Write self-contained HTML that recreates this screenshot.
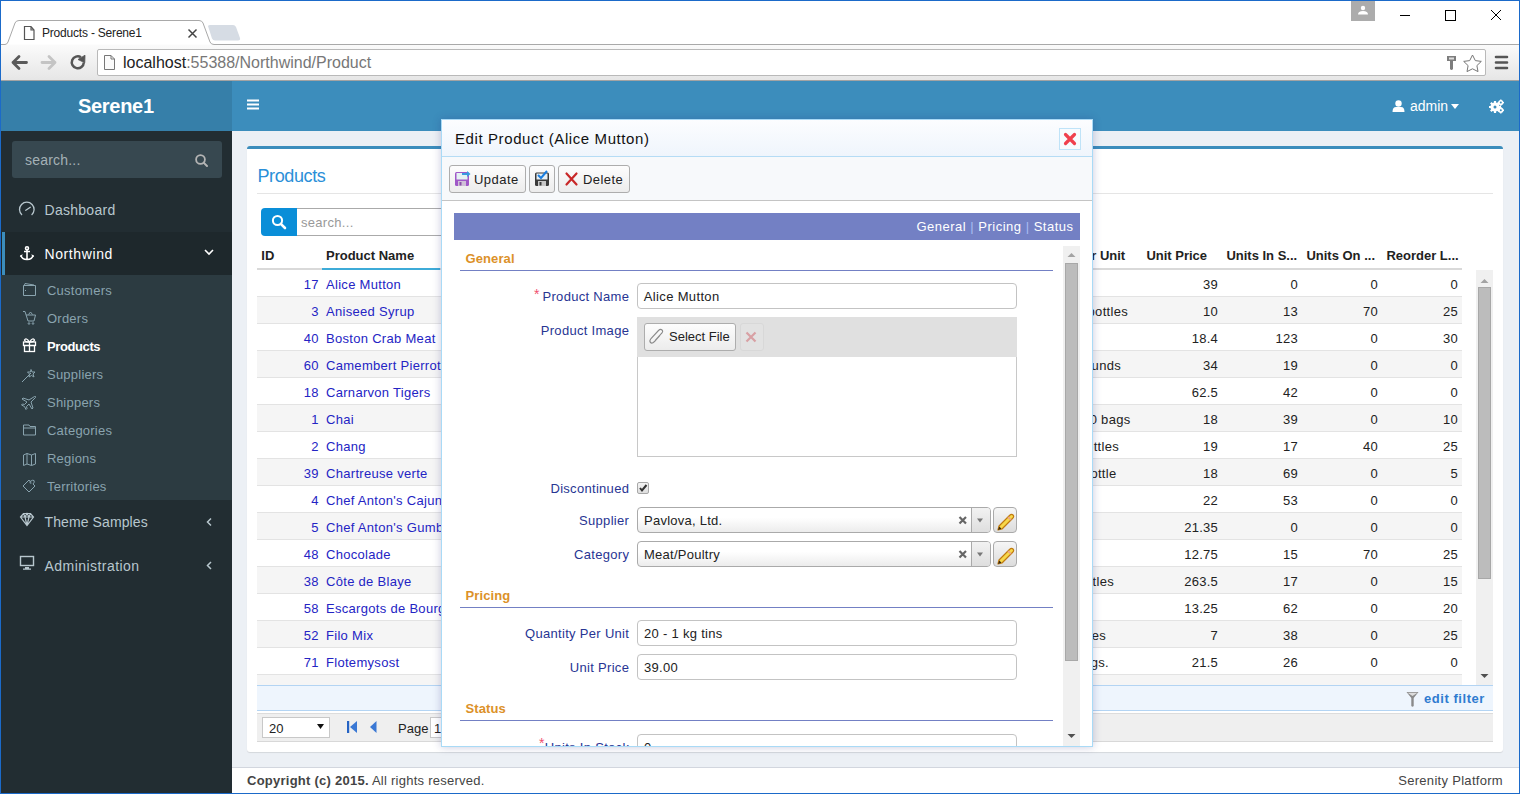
<!DOCTYPE html>
<html><head><meta charset="utf-8">
<style>
*{box-sizing:border-box}
html,body{margin:0;padding:0}
body{width:1520px;height:794px;overflow:hidden;position:relative;background:#fff;font-family:"Liberation Sans",sans-serif;color:#333}
.a{position:absolute}
.t{position:absolute;white-space:nowrap;line-height:1}
/* chrome */
#titlebar{left:0;top:0;width:1520px;height:44px;background:#fff}
#toolbar{left:0;top:44px;width:1520px;height:37px;background:linear-gradient(#fbfbfb,#e6e6e6);border-bottom:1px solid #a3a3a3}
#url{left:97px;top:49px;width:1389px;height:27px;background:#fff;border:1px solid #b9b9b9;border-radius:2px}
/* header */
#hdrL{left:0;top:81px;width:232px;height:50px;background:#367fa9}
#hdrR{left:232px;top:81px;width:1288px;height:50px;background:#3c8dbc}
#side{left:0;top:131px;width:232px;height:663px;background:#222d32}
#content{left:232px;top:131px;width:1288px;height:636px;background:#ecf0f5}
#footer{left:232px;top:767px;width:1288px;height:27px;background:#fff;border-top:1px solid #d2d6de}
#winborder{left:0;top:0;width:1520px;height:794px;border:1px solid #1b6ac9;z-index:100;pointer-events:none}
</style></head>
<body>
<div id="titlebar" class="a"></div>
<div id="toolbar" class="a"></div>
<div id="url" class="a"></div>
<svg class="a" style="left:0;top:0" width="1520" height="81">
  <path d="M0.5 44.5 H5 Q7 44.5 8 42 L15 23 Q16 20.5 19 20.5 H199 Q202 20.5 203 23 L210 42 Q211 44.5 214 44.5 H1520" fill="#fff" stroke="#a9a9a9" stroke-width="1"/>
  <path d="M208 26 Q208.5 25 210 25 H233 Q235 25 236 27 L240 38 Q240.5 40.5 238 40.5 H215 Q213 40.5 212 38.5 Z" fill="#d6dce4"/>
  <path d="M24.5 26.5 H31 L34 30 V39.5 H24.5 Z M31 26.5 V30 H34" fill="#fff" stroke="#555" stroke-width="1.2"/>
  <path d="M188.5 29.5 L196.5 37.5 M196.5 29.5 L188.5 37.5" stroke="#444" stroke-width="1.5"/>
  <rect x="1351" y="1" width="24" height="20" fill="#acacac"/>
  <circle cx="1363" cy="8" r="2.2" fill="#fff"/>
  <path d="M1358 14.5 Q1358 11 1363 11 Q1368 11 1368 14.5 Z" fill="#fff"/>
  <path d="M1400 15.5 H1410" stroke="#000" stroke-width="1"/>
  <rect x="1445.5" y="10.5" width="10" height="10" fill="none" stroke="#000" stroke-width="1"/>
  <path d="M1491 10 L1501 20 M1501 10 L1491 20" stroke="#000" stroke-width="1"/>
  <!-- toolbar -->
  <path d="M13 62.5 H26.5 M19 56.5 L13 62.5 L19 68.5" fill="none" stroke="#5a5a5a" stroke-width="2.8" stroke-linecap="round" stroke-linejoin="round"/>
  <path d="M42 62.5 H55 M49 56.5 L55 62.5 L49 68.5" fill="none" stroke="#c4c4c4" stroke-width="2.8" stroke-linecap="round" stroke-linejoin="round"/>
  <path d="M81 57.2 A6 6 0 1 0 83.8 62.5" fill="none" stroke="#555" stroke-width="2.5"/>
  <path d="M78 59.5 L85 55.2 L84.8 62.8 Z" fill="#555" stroke="#555" stroke-width="0.8" stroke-linejoin="round"/>
  <path d="M104.5 55.5 H111 L114.5 59 V69.5 H104.5 Z M111 55.5 V59 H114.5" fill="#fbfbfb" stroke="#777" stroke-width="1"/>
  <path d="M1447 56 H1456 V61 H1453 V69 Q1451.5 71 1450 69 V61 H1447 Z" fill="#7d7d7d"/>
  <rect x="1449" y="57.5" width="5" height="2" fill="#ddd"/>
  <path d="M1472.5 55 L1475.3 60.6 L1481.3 61.4 L1476.9 65.6 L1478 71.6 L1472.5 68.8 L1467 71.6 L1468.1 65.6 L1463.7 61.4 L1469.7 60.6 Z" fill="#fff" stroke="#777" stroke-width="1"/>
  <path d="M1496 57 H1507 M1496 62.5 H1507 M1496 68 H1507" stroke="#555" stroke-width="2.6" stroke-linecap="round"/>
</svg>
<div class="t" style="left:42px;top:27px;font-size:12px;color:#222;letter-spacing:-0.2px">Products - Serene1</div>
<div class="t" style="left:123px;top:55px;font-size:16px;color:#222">localhost<span style="color:#777">:55388/Northwind/Product</span></div>

<div id="hdrL" class="a"></div>
<div id="hdrR" class="a"></div>
<div id="side" class="a"></div>
<div id="content" class="a"></div>
<div class="t" style="left:78px;top:96.1px;font-size:20px;font-weight:bold;color:#fff;letter-spacing:-0.3px">Serene1</div>
<svg class="a" style="left:232px;top:81px" width="1288" height="50">
  <path d="M15 19.5 H27 M15 23.5 H27 M15 27.5 H27" stroke="#fff" stroke-width="2"/>
  <circle cx="1166.5" cy="22.5" r="3.2" fill="#fff"/>
  <path d="M1160.5 31 Q1160.5 26 1164 26 H1169 Q1172.5 26 1172.5 31 Z" fill="#fff"/>
  <path d="M1219 23 H1227 L1223 28 Z" fill="#fff"/>
  <g fill="#fff">
   <circle cx="1263" cy="26" r="4.6"/>
   <circle cx="1268.8" cy="21.6" r="2.6"/>
   <circle cx="1268.8" cy="29.2" r="2.6"/>
  </g>
  <g stroke="#fff" stroke-width="2.2">
   <path d="M1257 26 H1269 M1263 20 V32 M1258.8 21.8 L1267.2 30.2 M1267.2 21.8 L1258.8 30.2"/>
  </g>
  <g stroke="#fff" stroke-width="1.4">
   <path d="M1265.6 21.6 H1272 M1268.8 18.4 V24.8 M1265.6 29.2 H1272 M1268.8 26 V32.4"/>
  </g>
  <circle cx="1263" cy="26" r="1.5" fill="#3c8dbc"/>
  <circle cx="1268.8" cy="21.6" r="1" fill="#3c8dbc"/>
  <circle cx="1268.8" cy="29.2" r="1" fill="#3c8dbc"/>
</svg>
<div class="t" style="left:1410px;top:98.7px;font-size:14px;color:#fff">admin</div>

<div class="a" style="left:12px;top:141px;width:210px;height:37px;background:#374850;border-radius:3px"></div>
<div class="t" style="left:25px;top:153.1px;font-size:14px;color:#a4b1b6;letter-spacing:0.2px">search...</div>
<div class="a" style="left:0;top:232px;width:232px;height:43px;background:#1e282c"></div>
<div class="a" style="left:2px;top:232px;width:3px;height:43px;background:#3c8dbc"></div>
<div class="a" style="left:0;top:275px;width:232px;height:225px;background:#2c3b41"></div>
<div class="t" style="left:44.5px;top:203.1px;font-size:14px;color:#b8c7ce;letter-spacing:0.28px">Dashboard</div>
<div class="t" style="left:44.5px;top:247.1px;font-size:14px;color:#fff;letter-spacing:0.6px">Northwind</div>
<div class="t" style="left:47px;top:284.0px;font-size:13px;color:#8aa4af;letter-spacing:0.23px">Customers</div>
<div class="t" style="left:47px;top:312.0px;font-size:13px;color:#8aa4af;letter-spacing:0.23px">Orders</div>
<div class="t" style="left:47px;top:340.0px;font-size:13px;color:#fff;font-weight:bold;letter-spacing:-0.4px">Products</div>
<div class="t" style="left:47px;top:368.0px;font-size:13px;color:#8aa4af;letter-spacing:0.23px">Suppliers</div>
<div class="t" style="left:47px;top:396.0px;font-size:13px;color:#8aa4af;letter-spacing:0.23px">Shippers</div>
<div class="t" style="left:47px;top:424.0px;font-size:13px;color:#8aa4af;letter-spacing:0.23px">Categories</div>
<div class="t" style="left:47px;top:452.0px;font-size:13px;color:#8aa4af;letter-spacing:0.23px">Regions</div>
<div class="t" style="left:47px;top:480.0px;font-size:13px;color:#8aa4af;letter-spacing:0.23px">Territories</div>
<div class="t" style="left:44.5px;top:515.1px;font-size:14px;color:#b8c7ce;letter-spacing:0.1px">Theme Samples</div>
<div class="t" style="left:44.5px;top:558.6px;font-size:14px;color:#b8c7ce;letter-spacing:0.45px">Administration</div>
<svg class="a" style="left:0;top:131px" width="232" height="663">
  <!-- search icon -->
  <circle cx="200.5" cy="28.5" r="4.4" fill="none" stroke="#b4b4b4" stroke-width="1.8"/>
  <path d="M203.6 31.6 L207 35" stroke="#b4b4b4" stroke-width="2" stroke-linecap="round"/>
  <!-- dashboard gauge -->
  <path d="M22 84 A7.3 7.3 0 1 1 31.6 84" fill="none" stroke="#b8c7ce" stroke-width="1.3"/>
  <path d="M25.8 79.3 L30.3 76.3" stroke="#b8c7ce" stroke-width="1.3" stroke-linecap="round"/>
  <!-- anchor -->
  <g fill="none" stroke="#fff" stroke-width="1.6">
   <circle cx="27" cy="117.3" r="1.5"/>
   <path d="M27 119 V128.5 M24 120.5 H30 M21 124 Q21.5 128.5 27 128.5 Q32.5 128.5 33 124"/>
  </g>
  <path d="M19.8 125.3 L22.5 123 L21.8 126.8 Z M34.2 125.3 L31.5 123 L32.2 126.8 Z" fill="#fff"/>
  <path d="M205 119 L209 123 L213 119" fill="none" stroke="#fff" stroke-width="1.6"/>
  <!-- customers wallet -->
  <g fill="none" stroke="#8aa4af" stroke-width="1">
   <path d="M23.5 154.5 H35.5 V164.5 H23.5 Z M24.5 154 L25 152.5 L34 154"/>
   <path d="M25 159.5 H26"/>
   <!-- orders cart -->
   <path d="M23 180.5 L25 180.5 L28 190 H34 L35.5 184 H26"/>
   <circle cx="29" cy="192.5" r="0.8"/><circle cx="33" cy="192.5" r="0.8"/>
   <path d="M28.5 183.5 L30.5 181 L32.5 183.5"/>
  </g>
  <!-- products gift -->
  <g fill="none" stroke="#fff" stroke-width="1.3">
   <rect x="23.5" y="211" width="12" height="3.5"/>
   <rect x="24.5" y="214.5" width="10" height="6"/>
   <path d="M29.5 211 V220.5 M29.5 211 Q26 206 24.5 209 Q25 211 29.5 211 M29.5 211 Q33 206 34.5 209 Q34 211 29.5 211"/>
  </g>
  <g fill="none" stroke="#8aa4af" stroke-width="1">
   <!-- suppliers wand -->
   <path d="M22 251 L31 242 M31 238.5 L32 241 L35 241 L33 243 L34 246 L31.5 244.5 L29 246 L29.5 243 L27.5 241 L30.5 241 Z"/>
   <!-- shippers plane -->
   <path d="M34.5 265.5 Q36 265 35.5 266.5 L31 271 L33 277 L32 278 L29 273 L26.5 275.5 L27 277.5 L26 278.5 L24.5 275.5 L21.5 274 L22.5 273 L24.5 273.5 L27 271 L22 268 L23 267 L29 269 Z"/>
   <!-- categories folder -->
   <path d="M23.5 294 H29 L30 295.5 H35.5 V304 H23.5 Z M23.5 297 H35.5"/>
   <!-- regions map -->
   <path d="M23.5 324 L27 322.5 L31.5 324 L35.5 322.5 V333 L31.5 334.5 L27 333 L23.5 334.5 Z M27 322.5 V333 M31.5 324 V334.5"/>
   <!-- territories tag -->
   <path d="M23 355 L29 349 L30 350.5 Q33 348.5 34 349.5 Q35 351 33 353 L35 355 L29 361 Z M30 350.5 Q29.5 353 31.5 352"/>
  </g>
  <!-- diamond -->
  <g fill="none" stroke="#b8c7ce" stroke-width="1.2">
   <path d="M20.5 386 L23.5 382.5 H30.5 L33.5 386 L27 394.5 Z M20.5 386 H33.5 M25 386 L27 394.5 L29 386 M23.5 382.5 L25 386 L27 382.5 L29 386 L30.5 382.5"/>
  </g>
  <!-- monitor -->
  <g fill="none" stroke="#b8c7ce" stroke-width="1.4">
   <rect x="20.5" y="425.5" width="13" height="9"/>
  </g>
  <path d="M25 436 H29 V437.5 H31 V438.8 H23 V437.5 H25 Z" fill="#b8c7ce"/>
  <path d="M211 387.5 L207.5 391 L211 394.5 M211 431 L207.5 434.5 L211 438" fill="none" stroke="#b8c7ce" stroke-width="1.5"/>
</svg>

<div id="footer" class="a"></div>
<div class="a" style="left:247px;top:146px;width:1256px;height:606px;background:#fff;border-top:3px solid #3c8dbc;border-radius:3px;box-shadow:0 1px 1px rgba(0,0,0,0.1)"></div>
<div class="t" style="left:257.5px;top:166.5px;font-size:18px;color:#2a8fd8;letter-spacing:-0.4px">Products</div>
<div class="a" style="left:257px;top:193px;width:1236px;height:1px;background:#e5e5e5"></div>
<div class="a" style="left:261px;top:208px;width:36px;height:28px;background:#0a8ed8;border-radius:4px 0 0 4px"></div>
<div class="a" style="left:297px;top:208px;width:300px;height:28px;background:#fff;border:1px solid #aaa;border-left:none"></div>
<svg class="a" style="left:261px;top:208px" width="36" height="28"><circle cx="16.5" cy="12.5" r="4.6" fill="none" stroke="#fff" stroke-width="2"/><path d="M19.8 15.8 L24 20" stroke="#fff" stroke-width="2.6" stroke-linecap="round"/></svg>
<div class="t" style="left:301px;top:215.5px;font-size:13px;color:#999;letter-spacing:0.3px">search...</div>
<div class="t" style="left:261.3px;top:249.2px;font-size:13px;font-weight:bold;color:#222">ID</div>
<div class="t" style="left:326px;top:249.2px;font-size:13px;font-weight:bold;color:#222">Product Name</div>
<div class="t" style="left:1146.4px;top:249.2px;font-size:13px;font-weight:bold;color:#222">Unit Price</div>
<div class="t" style="left:1226.4px;top:249.2px;font-size:13px;font-weight:bold;color:#222">Units In S...</div>
<div class="t" style="left:1306.4px;top:249.2px;font-size:13px;font-weight:bold;color:#222">Units On ...</div>
<div class="t" style="left:1386.4px;top:249.2px;font-size:13px;font-weight:bold;color:#222">Reorder L...</div>
<div class="t" style="right:394.79999999999995px;top:249.2px;font-size:13px;font-weight:bold;color:#222">Quantity Per Unit</div>
<div class="a" style="left:257px;top:268px;width:65px;height:2px;background:#d9d9d9"></div>
<div class="a" style="left:322px;top:268px;width:118px;height:2px;background:#3dabd8"></div>
<div class="a" style="left:440px;top:268px;width:1022px;height:2px;background:#d9d9d9"></div>
<div class="a" style="left:257px;top:270px;width:1205px;height:27px;background:#fff;border-bottom:1px solid #e3e3e3"></div>
<div class="t" style="right:1201.4px;top:278.0px;font-size:13px;color:#2424c4;letter-spacing:0.2px">17</div>
<div class="t" style="left:326px;top:278.0px;font-size:13px;color:#2424c4;letter-spacing:0.3px">Alice Mutton</div>
<div class="t" style="right:302.1px;top:278.0px;font-size:13px;color:#222;letter-spacing:0.2px">39</div>
<div class="t" style="right:222.1px;top:278.0px;font-size:13px;color:#222;letter-spacing:0.2px">0</div>
<div class="t" style="right:142.1px;top:278.0px;font-size:13px;color:#222;letter-spacing:0.2px">0</div>
<div class="t" style="right:62.1px;top:278.0px;font-size:13px;color:#222;letter-spacing:0.2px">0</div>
<div class="a" style="left:257px;top:297px;width:1205px;height:27px;background:#f5f5f5;border-bottom:1px solid #e3e3e3"></div>
<div class="t" style="right:1201.4px;top:305.0px;font-size:13px;color:#2424c4;letter-spacing:0.2px">3</div>
<div class="t" style="left:326px;top:305.0px;font-size:13px;color:#2424c4;letter-spacing:0.3px">Aniseed Syrup</div>
<div class="t" style="right:392px;top:305.0px;font-size:13px;color:#222;letter-spacing:0.3px">bottles</div>
<div class="t" style="right:302.1px;top:305.0px;font-size:13px;color:#222;letter-spacing:0.2px">10</div>
<div class="t" style="right:222.1px;top:305.0px;font-size:13px;color:#222;letter-spacing:0.2px">13</div>
<div class="t" style="right:142.1px;top:305.0px;font-size:13px;color:#222;letter-spacing:0.2px">70</div>
<div class="t" style="right:62.1px;top:305.0px;font-size:13px;color:#222;letter-spacing:0.2px">25</div>
<div class="a" style="left:257px;top:324px;width:1205px;height:27px;background:#fff;border-bottom:1px solid #e3e3e3"></div>
<div class="t" style="right:1201.4px;top:332.0px;font-size:13px;color:#2424c4;letter-spacing:0.2px">40</div>
<div class="t" style="left:326px;top:332.0px;font-size:13px;color:#2424c4;letter-spacing:0.3px">Boston Crab Meat</div>
<div class="t" style="right:302.1px;top:332.0px;font-size:13px;color:#222;letter-spacing:0.2px">18.4</div>
<div class="t" style="right:222.1px;top:332.0px;font-size:13px;color:#222;letter-spacing:0.2px">123</div>
<div class="t" style="right:142.1px;top:332.0px;font-size:13px;color:#222;letter-spacing:0.2px">0</div>
<div class="t" style="right:62.1px;top:332.0px;font-size:13px;color:#222;letter-spacing:0.2px">30</div>
<div class="a" style="left:257px;top:351px;width:1205px;height:27px;background:#f5f5f5;border-bottom:1px solid #e3e3e3"></div>
<div class="t" style="right:1201.4px;top:359.0px;font-size:13px;color:#2424c4;letter-spacing:0.2px">60</div>
<div class="t" style="left:326px;top:359.0px;font-size:13px;color:#2424c4;letter-spacing:0.3px">Camembert Pierrot</div>
<div class="t" style="right:399px;top:359.0px;font-size:13px;color:#222;letter-spacing:0.3px">rounds</div>
<div class="t" style="right:302.1px;top:359.0px;font-size:13px;color:#222;letter-spacing:0.2px">34</div>
<div class="t" style="right:222.1px;top:359.0px;font-size:13px;color:#222;letter-spacing:0.2px">19</div>
<div class="t" style="right:142.1px;top:359.0px;font-size:13px;color:#222;letter-spacing:0.2px">0</div>
<div class="t" style="right:62.1px;top:359.0px;font-size:13px;color:#222;letter-spacing:0.2px">0</div>
<div class="a" style="left:257px;top:378px;width:1205px;height:27px;background:#fff;border-bottom:1px solid #e3e3e3"></div>
<div class="t" style="right:1201.4px;top:386.0px;font-size:13px;color:#2424c4;letter-spacing:0.2px">18</div>
<div class="t" style="left:326px;top:386.0px;font-size:13px;color:#2424c4;letter-spacing:0.3px">Carnarvon Tigers</div>
<div class="t" style="right:302.1px;top:386.0px;font-size:13px;color:#222;letter-spacing:0.2px">62.5</div>
<div class="t" style="right:222.1px;top:386.0px;font-size:13px;color:#222;letter-spacing:0.2px">42</div>
<div class="t" style="right:142.1px;top:386.0px;font-size:13px;color:#222;letter-spacing:0.2px">0</div>
<div class="t" style="right:62.1px;top:386.0px;font-size:13px;color:#222;letter-spacing:0.2px">0</div>
<div class="a" style="left:257px;top:405px;width:1205px;height:27px;background:#f5f5f5;border-bottom:1px solid #e3e3e3"></div>
<div class="t" style="right:1201.4px;top:413.0px;font-size:13px;color:#2424c4;letter-spacing:0.2px">1</div>
<div class="t" style="left:326px;top:413.0px;font-size:13px;color:#2424c4;letter-spacing:0.3px">Chai</div>
<div class="t" style="right:389.5px;top:413.0px;font-size:13px;color:#222;letter-spacing:0.3px">20 bags</div>
<div class="t" style="right:302.1px;top:413.0px;font-size:13px;color:#222;letter-spacing:0.2px">18</div>
<div class="t" style="right:222.1px;top:413.0px;font-size:13px;color:#222;letter-spacing:0.2px">39</div>
<div class="t" style="right:142.1px;top:413.0px;font-size:13px;color:#222;letter-spacing:0.2px">0</div>
<div class="t" style="right:62.1px;top:413.0px;font-size:13px;color:#222;letter-spacing:0.2px">10</div>
<div class="a" style="left:257px;top:432px;width:1205px;height:27px;background:#fff;border-bottom:1px solid #e3e3e3"></div>
<div class="t" style="right:1201.4px;top:440.0px;font-size:13px;color:#2424c4;letter-spacing:0.2px">2</div>
<div class="t" style="left:326px;top:440.0px;font-size:13px;color:#2424c4;letter-spacing:0.3px">Chang</div>
<div class="t" style="right:401px;top:440.0px;font-size:13px;color:#222;letter-spacing:0.3px">bottles</div>
<div class="t" style="right:302.1px;top:440.0px;font-size:13px;color:#222;letter-spacing:0.2px">19</div>
<div class="t" style="right:222.1px;top:440.0px;font-size:13px;color:#222;letter-spacing:0.2px">17</div>
<div class="t" style="right:142.1px;top:440.0px;font-size:13px;color:#222;letter-spacing:0.2px">40</div>
<div class="t" style="right:62.1px;top:440.0px;font-size:13px;color:#222;letter-spacing:0.2px">25</div>
<div class="a" style="left:257px;top:459px;width:1205px;height:27px;background:#f5f5f5;border-bottom:1px solid #e3e3e3"></div>
<div class="t" style="right:1201.4px;top:467.0px;font-size:13px;color:#2424c4;letter-spacing:0.2px">39</div>
<div class="t" style="left:326px;top:467.0px;font-size:13px;color:#2424c4;letter-spacing:0.3px">Chartreuse verte</div>
<div class="t" style="right:403.5px;top:467.0px;font-size:13px;color:#222;letter-spacing:0.3px">bottle</div>
<div class="t" style="right:302.1px;top:467.0px;font-size:13px;color:#222;letter-spacing:0.2px">18</div>
<div class="t" style="right:222.1px;top:467.0px;font-size:13px;color:#222;letter-spacing:0.2px">69</div>
<div class="t" style="right:142.1px;top:467.0px;font-size:13px;color:#222;letter-spacing:0.2px">0</div>
<div class="t" style="right:62.1px;top:467.0px;font-size:13px;color:#222;letter-spacing:0.2px">5</div>
<div class="a" style="left:257px;top:486px;width:1205px;height:27px;background:#fff;border-bottom:1px solid #e3e3e3"></div>
<div class="t" style="right:1201.4px;top:494.0px;font-size:13px;color:#2424c4;letter-spacing:0.2px">4</div>
<div class="t" style="left:326px;top:494.0px;font-size:13px;color:#2424c4;letter-spacing:0.3px">Chef Anton's Cajun Seasoning</div>
<div class="t" style="right:302.1px;top:494.0px;font-size:13px;color:#222;letter-spacing:0.2px">22</div>
<div class="t" style="right:222.1px;top:494.0px;font-size:13px;color:#222;letter-spacing:0.2px">53</div>
<div class="t" style="right:142.1px;top:494.0px;font-size:13px;color:#222;letter-spacing:0.2px">0</div>
<div class="t" style="right:62.1px;top:494.0px;font-size:13px;color:#222;letter-spacing:0.2px">0</div>
<div class="a" style="left:257px;top:513px;width:1205px;height:27px;background:#f5f5f5;border-bottom:1px solid #e3e3e3"></div>
<div class="t" style="right:1201.4px;top:521.0px;font-size:13px;color:#2424c4;letter-spacing:0.2px">5</div>
<div class="t" style="left:326px;top:521.0px;font-size:13px;color:#2424c4;letter-spacing:0.3px">Chef Anton's Gumbo Mix</div>
<div class="t" style="right:302.1px;top:521.0px;font-size:13px;color:#222;letter-spacing:0.2px">21.35</div>
<div class="t" style="right:222.1px;top:521.0px;font-size:13px;color:#222;letter-spacing:0.2px">0</div>
<div class="t" style="right:142.1px;top:521.0px;font-size:13px;color:#222;letter-spacing:0.2px">0</div>
<div class="t" style="right:62.1px;top:521.0px;font-size:13px;color:#222;letter-spacing:0.2px">0</div>
<div class="a" style="left:257px;top:540px;width:1205px;height:27px;background:#fff;border-bottom:1px solid #e3e3e3"></div>
<div class="t" style="right:1201.4px;top:548.0px;font-size:13px;color:#2424c4;letter-spacing:0.2px">48</div>
<div class="t" style="left:326px;top:548.0px;font-size:13px;color:#2424c4;letter-spacing:0.3px">Chocolade</div>
<div class="t" style="right:302.1px;top:548.0px;font-size:13px;color:#222;letter-spacing:0.2px">12.75</div>
<div class="t" style="right:222.1px;top:548.0px;font-size:13px;color:#222;letter-spacing:0.2px">15</div>
<div class="t" style="right:142.1px;top:548.0px;font-size:13px;color:#222;letter-spacing:0.2px">70</div>
<div class="t" style="right:62.1px;top:548.0px;font-size:13px;color:#222;letter-spacing:0.2px">25</div>
<div class="a" style="left:257px;top:567px;width:1205px;height:27px;background:#f5f5f5;border-bottom:1px solid #e3e3e3"></div>
<div class="t" style="right:1201.4px;top:575.0px;font-size:13px;color:#2424c4;letter-spacing:0.2px">38</div>
<div class="t" style="left:326px;top:575.0px;font-size:13px;color:#2424c4;letter-spacing:0.3px">Côte de Blaye</div>
<div class="t" style="right:406px;top:575.0px;font-size:13px;color:#222;letter-spacing:0.3px">bottles</div>
<div class="t" style="right:302.1px;top:575.0px;font-size:13px;color:#222;letter-spacing:0.2px">263.5</div>
<div class="t" style="right:222.1px;top:575.0px;font-size:13px;color:#222;letter-spacing:0.2px">17</div>
<div class="t" style="right:142.1px;top:575.0px;font-size:13px;color:#222;letter-spacing:0.2px">0</div>
<div class="t" style="right:62.1px;top:575.0px;font-size:13px;color:#222;letter-spacing:0.2px">15</div>
<div class="a" style="left:257px;top:594px;width:1205px;height:27px;background:#fff;border-bottom:1px solid #e3e3e3"></div>
<div class="t" style="right:1201.4px;top:602.0px;font-size:13px;color:#2424c4;letter-spacing:0.2px">58</div>
<div class="t" style="left:326px;top:602.0px;font-size:13px;color:#2424c4;letter-spacing:0.3px">Escargots de Bourgogne</div>
<div class="t" style="right:302.1px;top:602.0px;font-size:13px;color:#222;letter-spacing:0.2px">13.25</div>
<div class="t" style="right:222.1px;top:602.0px;font-size:13px;color:#222;letter-spacing:0.2px">62</div>
<div class="t" style="right:142.1px;top:602.0px;font-size:13px;color:#222;letter-spacing:0.2px">0</div>
<div class="t" style="right:62.1px;top:602.0px;font-size:13px;color:#222;letter-spacing:0.2px">20</div>
<div class="a" style="left:257px;top:621px;width:1205px;height:27px;background:#f5f5f5;border-bottom:1px solid #e3e3e3"></div>
<div class="t" style="right:1201.4px;top:629.0px;font-size:13px;color:#2424c4;letter-spacing:0.2px">52</div>
<div class="t" style="left:326px;top:629.0px;font-size:13px;color:#2424c4;letter-spacing:0.3px">Filo Mix</div>
<div class="t" style="right:414px;top:629.0px;font-size:13px;color:#222;letter-spacing:0.3px">boxes</div>
<div class="t" style="right:302.1px;top:629.0px;font-size:13px;color:#222;letter-spacing:0.2px">7</div>
<div class="t" style="right:222.1px;top:629.0px;font-size:13px;color:#222;letter-spacing:0.2px">38</div>
<div class="t" style="right:142.1px;top:629.0px;font-size:13px;color:#222;letter-spacing:0.2px">0</div>
<div class="t" style="right:62.1px;top:629.0px;font-size:13px;color:#222;letter-spacing:0.2px">25</div>
<div class="a" style="left:257px;top:648px;width:1205px;height:27px;background:#fff;border-bottom:1px solid #e3e3e3"></div>
<div class="t" style="right:1201.4px;top:656.0px;font-size:13px;color:#2424c4;letter-spacing:0.2px">71</div>
<div class="t" style="left:326px;top:656.0px;font-size:13px;color:#2424c4;letter-spacing:0.3px">Flotemysost</div>
<div class="t" style="right:411px;top:656.0px;font-size:13px;color:#222;letter-spacing:0.3px">pkgs.</div>
<div class="t" style="right:302.1px;top:656.0px;font-size:13px;color:#222;letter-spacing:0.2px">21.5</div>
<div class="t" style="right:222.1px;top:656.0px;font-size:13px;color:#222;letter-spacing:0.2px">26</div>
<div class="t" style="right:142.1px;top:656.0px;font-size:13px;color:#222;letter-spacing:0.2px">0</div>
<div class="t" style="right:62.1px;top:656.0px;font-size:13px;color:#222;letter-spacing:0.2px">0</div>
<div class="a" style="left:257px;top:675px;width:1205px;height:10px;background:#f5f5f5;"></div>
<div class="a" style="left:1476px;top:270px;width:17px;height:415px;background:#f0f0f0"></div>
<div class="a" style="left:1478px;top:287px;width:13px;height:292px;background:#bcbcbc;border:1px solid #a8a8a8"></div>
<svg class="a" style="left:1476px;top:270px" width="17" height="415"><path d="M4.5 13 L8.5 9 L12.5 13 Z" fill="#a3a3a3"/><path d="M4.5 404 L8.5 408 L12.5 404 Z" fill="#505050"/></svg>
<div class="a" style="left:257px;top:685px;width:1236px;height:26px;background:#eef5fd;border-top:1px solid #b3d4f3;border-bottom:1px solid #b3d4f3"></div>
<svg class="a" style="left:1405px;top:690px" width="16" height="18"><path d="M1.5 2 H13.5 L8.7 8 V16 Q7.5 17.5 6.3 16 V8 Z" fill="#8a8a8a"/><path d="M2.5 2.8 H12.5 L7.5 6 Z" fill="#dcdcdc"/></svg>
<div class="t" style="left:1424px;top:692.0px;font-size:13px;font-weight:bold;color:#2f7bd0;letter-spacing:0.55px">edit filter</div>
<div class="a" style="left:257px;top:713px;width:1236px;height:29px;background:#efefef;border-top:1px solid #dcdcdc;border-bottom:1px solid #d8d8d8"></div>
<div class="a" style="left:262px;top:717px;width:68px;height:21px;background:#fff;border:1px solid #c8c8c8"></div>
<div class="t" style="left:269px;top:721.5px;font-size:13px;color:#222">20</div>
<svg class="a" style="left:300px;top:716px" width="140" height="25"><path d="M17 8 H24 L20.5 13 Z" fill="#111"/><rect x="47" y="5" width="2.2" height="12" fill="#2563c4"/><path d="M57 5 V17 L50 11 Z" fill="#3a78d4"/><path d="M76.5 5 V17 L70 11 Z" fill="#3a78d4"/></svg>
<div class="t" style="left:398px;top:721.5px;font-size:13px;color:#222;letter-spacing:0px">Page</div>
<div class="a" style="left:430px;top:717px;width:40px;height:21px;background:#fff;border:1px solid #c8c8c8"></div>
<div class="t" style="left:434px;top:721.5px;font-size:13px;color:#222">1</div>
<div class="t" style="left:247px;top:774.0px;font-size:13px;color:#444;letter-spacing:0.25px"><b>Copyright (c) 2015.</b> All rights reserved.</div>
<div class="t" style="right:17px;top:774.0px;font-size:13px;color:#444;letter-spacing:0.3px">Serenity Platform</div>
<!--DIALOG-->
<div class="a" style="left:441px;top:119px;width:652px;height:628px;background:#fff;border:1px solid #a9daf6;box-shadow:0 0 8px rgba(40,40,120,0.25)"></div>
<div class="a" style="left:442px;top:120px;width:650px;height:37px;background:linear-gradient(#fcfdff,#eff5fc);border-bottom:1px solid #b5dcf5"></div>
<div class="t" style="left:455px;top:131.0px;font-size:15px;color:#111;letter-spacing:0.6px">Edit Product (Alice Mutton)</div>
<div class="a" style="left:1059px;top:128px;width:22px;height:22px;border:1px solid #bfe3f8;background:#f7fbff"></div>
<svg class="a" style="left:1059px;top:128px" width="22" height="22"><path d="M6.5 6.5 L15.5 15.5 M15.5 6.5 L6.5 15.5" stroke="#f0404e" stroke-width="3.2" stroke-linecap="round"/></svg>
<div class="a" style="left:442px;top:157px;width:650px;height:44px;background:#f7f9fb;border-bottom:1px solid #c4c4c4"></div>
<div class="a" style="left:449px;top:165px;width:77px;height:28px;background:linear-gradient(#fdfdfd,#ececec);border:1px solid #adadad;border-radius:3px"></div>
<div class="a" style="left:529px;top:165px;width:26px;height:28px;background:linear-gradient(#fdfdfd,#ececec);border:1px solid #adadad;border-radius:3px"></div>
<div class="a" style="left:558px;top:165px;width:72px;height:28px;background:linear-gradient(#fdfdfd,#ececec);border:1px solid #adadad;border-radius:3px"></div>
<div class="t" style="left:474px;top:172.6px;font-size:13px;color:#222;letter-spacing:0.45px">Update</div>
<div class="t" style="left:583px;top:172.6px;font-size:13px;color:#222;letter-spacing:0.45px">Delete</div>
<svg class="a" style="left:449px;top:165px" width="185" height="28">
 <g>
  <rect x="6" y="7" width="14" height="14" rx="1.5" fill="#a058c8"/>
  <rect x="7.5" y="8" width="11" height="6.5" fill="#e4f2f2"/>
  <rect x="9" y="16" width="8" height="5" fill="#d0c0d8"/>
  <rect x="10.5" y="17" width="2" height="3.5" fill="#8a50a8"/>
  <path d="M13 8 H18 V6 L21.5 9 L18 12 V10 H13 Z" fill="#3a9ae0"/>
 </g>
 <g>
  <rect x="86" y="7.5" width="14" height="13.5" rx="1.5" fill="#3a3a3a"/>
  <rect x="87.5" y="8.5" width="11" height="6" fill="#e8f0f4"/>
  <rect x="89" y="16" width="8" height="5" fill="#c8c8c8"/>
  <rect x="90.5" y="17" width="2" height="3.5" fill="#3a3a3a"/>
  <path d="M89 10 L92 13 L98 6" fill="none" stroke="#1a7ee0" stroke-width="2"/>
 </g>
 <path d="M117.5 8.5 L127.5 19.5 M127.5 8.5 L117.5 19.5" stroke="#c82828" stroke-width="2.2" stroke-linecap="round"/>
</svg>
<div class="a" style="left:454px;top:213px;width:626px;height:27px;background:#7380c4"></div>
<div class="t" style="right:446.5px;top:220.0px;font-size:13px;color:#fff;letter-spacing:0.5px">General <span style="color:#a9bdf2">|</span> Pricing <span style="color:#a9bdf2">|</span> Status</div>
<div class="a" style="left:1063px;top:246px;width:17px;height:500px;background:#f0f0f0"></div>
<div class="a" style="left:1065px;top:263px;width:13px;height:398px;background:#bcbcbc;border:1px solid #a8a8a8"></div>
<svg class="a" style="left:1063px;top:246px" width="17" height="500"><path d="M4.5 11 L8.5 7 L12.5 11 Z" fill="#a3a3a3"/><path d="M4.5 488 L8.5 492 L12.5 488 Z" fill="#505050"/></svg>
<div class="t" style="left:465.5px;top:252.0px;font-size:13px;color:#dc9128;font-weight:bold;letter-spacing:0.1px">General</div>
<div class="a" style="left:460px;top:270px;width:593px;height:1px;background:#7380c4"></div>
<div class="t" style="left:465.5px;top:589.3px;font-size:13px;color:#dc9128;font-weight:bold;letter-spacing:0.1px">Pricing</div>
<div class="a" style="left:460px;top:607px;width:593px;height:1px;background:#7380c4"></div>
<div class="t" style="left:465.5px;top:701.8px;font-size:13px;color:#dc9128;font-weight:bold;letter-spacing:0.1px">Status</div>
<div class="a" style="left:460px;top:720px;width:593px;height:1px;background:#7380c4"></div>
<div class="t" style="left:534px;top:286.5px;font-size:14px;color:#f0506e">*</div>
<div class="t" style="right:890.8px;top:289.8px;font-size:13px;color:#283593;letter-spacing:0.3px">Product Name</div>
<div class="a" style="left:637px;top:283px;width:380px;height:26px;background:#fff;border:1px solid #c3c3c3;border-radius:4px"></div>
<div class="t" style="left:643.8px;top:289.8px;font-size:13px;color:#222;letter-spacing:0.35px">Alice Mutton</div>
<div class="t" style="right:890.8px;top:324.0px;font-size:13px;color:#283593;letter-spacing:0.3px">Product Image</div>
<div class="a" style="left:637px;top:317px;width:380px;height:140px;background:#fff;border:1px solid #c8c8c8;border-top:none"></div>
<div class="a" style="left:637px;top:317px;width:380px;height:40px;background:#e0e0e0"></div>
<div class="a" style="left:644px;top:323px;width:92px;height:28px;background:linear-gradient(#fdfdfd,#ececec);border:1px solid #adadad;border-radius:3px"></div>
<div class="a" style="left:740px;top:323px;width:24px;height:28px;border:1px solid #d8d8d8;border-radius:3px;background:#e2e2e2"></div>
<div class="t" style="left:669px;top:330.3px;font-size:13px;color:#222;letter-spacing:0px">Select File</div>
<svg class="a" style="left:644px;top:323px" width="122" height="28"><path d="M11 17.5 L17.5 10.5 Q19.5 8.5 18 7 Q16.5 5.5 14.5 7.5 L7 15.5 Q5 18 6.5 19.5 Q8 21 10.5 18.5 L16 12.5" fill="none" stroke="#8a8a8a" stroke-width="1.1"/><path d="M102.5 9.5 L111.5 18.5 M111.5 9.5 L102.5 18.5" stroke="#d8a0a4" stroke-width="2.2"/></svg>
<div class="t" style="right:890.8px;top:481.9px;font-size:13px;color:#283593;letter-spacing:0.3px">Discontinued</div>
<div class="a" style="left:637px;top:482px;width:12px;height:12px;border:1px solid #a8a8a8;border-radius:2px;background:linear-gradient(#f4f4f4,#dedede)"></div>
<svg class="a" style="left:637px;top:482px" width="12" height="12"><path d="M3 6 L5 8.5 L9.5 3" fill="none" stroke="#333" stroke-width="2"/></svg>
<div class="t" style="right:890.8px;top:514.2px;font-size:13px;color:#283593;letter-spacing:0.3px">Supplier</div>
<div class="a" style="left:637px;top:507px;width:354px;height:26px;background:linear-gradient(#fff 40%,#ececec);border:1px solid #aaa;border-radius:4px"></div>
<div class="a" style="left:971px;top:508px;width:19px;height:24px;background:linear-gradient(#f2f2f2,#dedede);border-left:1px solid #aaa;border-radius:0 3px 3px 0"></div>
<div class="t" style="left:644px;top:514.2px;font-size:13px;color:#222;letter-spacing:0.25px">Pavlova, Ltd.</div>
<div class="a" style="left:993px;top:507px;width:24px;height:26px;background:linear-gradient(#f6f6f6,#dcdcdc);border:1px solid #aaa;border-radius:4px"></div>
<svg class="a" style="left:955px;top:507px" width="65" height="26">
 <path d="M4.5 10 L11 16.5 M11 10 L4.5 16.5" stroke="#666" stroke-width="2.2"/>
 <path d="M22 11.5 H28 L25 15.5 Z" fill="#777"/>
 <path d="M44 19 L54.5 8.5 Q56.5 6.5 58 8 Q59.5 9.5 57.5 11.5 L47 22 L43 23 Z" fill="#f7d84a" stroke="#c07a10" stroke-width="1.2" stroke-linejoin="round"/>
 <path d="M43 23 L44.3 19.5 L46.5 21.7 Z" fill="#3a2a10"/>
 <path d="M53 10 L56 13" stroke="#e8a090" stroke-width="1.6"/>
</svg>
<div class="t" style="right:890.8px;top:547.8px;font-size:13px;color:#283593;letter-spacing:0.3px">Category</div>
<div class="a" style="left:637px;top:541px;width:354px;height:26px;background:linear-gradient(#fff 40%,#ececec);border:1px solid #aaa;border-radius:4px"></div>
<div class="a" style="left:971px;top:542px;width:19px;height:24px;background:linear-gradient(#f2f2f2,#dedede);border-left:1px solid #aaa;border-radius:0 3px 3px 0"></div>
<div class="t" style="left:644px;top:547.8px;font-size:13px;color:#222;letter-spacing:0.25px">Meat/Poultry</div>
<div class="a" style="left:993px;top:541px;width:24px;height:26px;background:linear-gradient(#f6f6f6,#dcdcdc);border:1px solid #aaa;border-radius:4px"></div>
<svg class="a" style="left:955px;top:541px" width="65" height="26">
 <path d="M4.5 10 L11 16.5 M11 10 L4.5 16.5" stroke="#666" stroke-width="2.2"/>
 <path d="M22 11.5 H28 L25 15.5 Z" fill="#777"/>
 <path d="M44 19 L54.5 8.5 Q56.5 6.5 58 8 Q59.5 9.5 57.5 11.5 L47 22 L43 23 Z" fill="#f7d84a" stroke="#c07a10" stroke-width="1.2" stroke-linejoin="round"/>
 <path d="M43 23 L44.3 19.5 L46.5 21.7 Z" fill="#3a2a10"/>
 <path d="M53 10 L56 13" stroke="#e8a090" stroke-width="1.6"/>
</svg>
<div class="t" style="right:890.8px;top:627.2px;font-size:13px;color:#283593;letter-spacing:0.3px">Quantity Per Unit</div>
<div class="a" style="left:637px;top:620px;width:380px;height:26px;background:#fff;border:1px solid #c3c3c3;border-radius:4px"></div>
<div class="t" style="left:644px;top:627.2px;font-size:13px;color:#222;letter-spacing:0.3px">20 - 1 kg tins</div>
<div class="t" style="right:890.8px;top:661.0px;font-size:13px;color:#283593;letter-spacing:0.3px">Unit Price</div>
<div class="a" style="left:637px;top:654px;width:380px;height:26px;background:#fff;border:1px solid #c3c3c3;border-radius:4px"></div>
<div class="t" style="left:644px;top:661.0px;font-size:13px;color:#222;letter-spacing:0.3px">39.00</div>
<div class="a" style="left:442px;top:726px;width:621px;height:20px;overflow:hidden">
<div class="t" style="left:97px;top:9.5px;font-size:14px;color:#f0506e">*</div>
<div class="t" style="right:433.79999999999995px;top:14.5px;font-size:13px;color:#283593;letter-spacing:0.3px">Units In Stock</div>
<div class="a" style="left:195px;top:7.7000000000000455px;width:380px;height:26px;background:#fff;border:1px solid #c3c3c3;border-radius:4px"></div>
<div class="t" style="left:202px;top:14.5px;font-size:13px;color:#222">0</div>
</div>
<div id="winborder" class="a"></div>
</body></html>
